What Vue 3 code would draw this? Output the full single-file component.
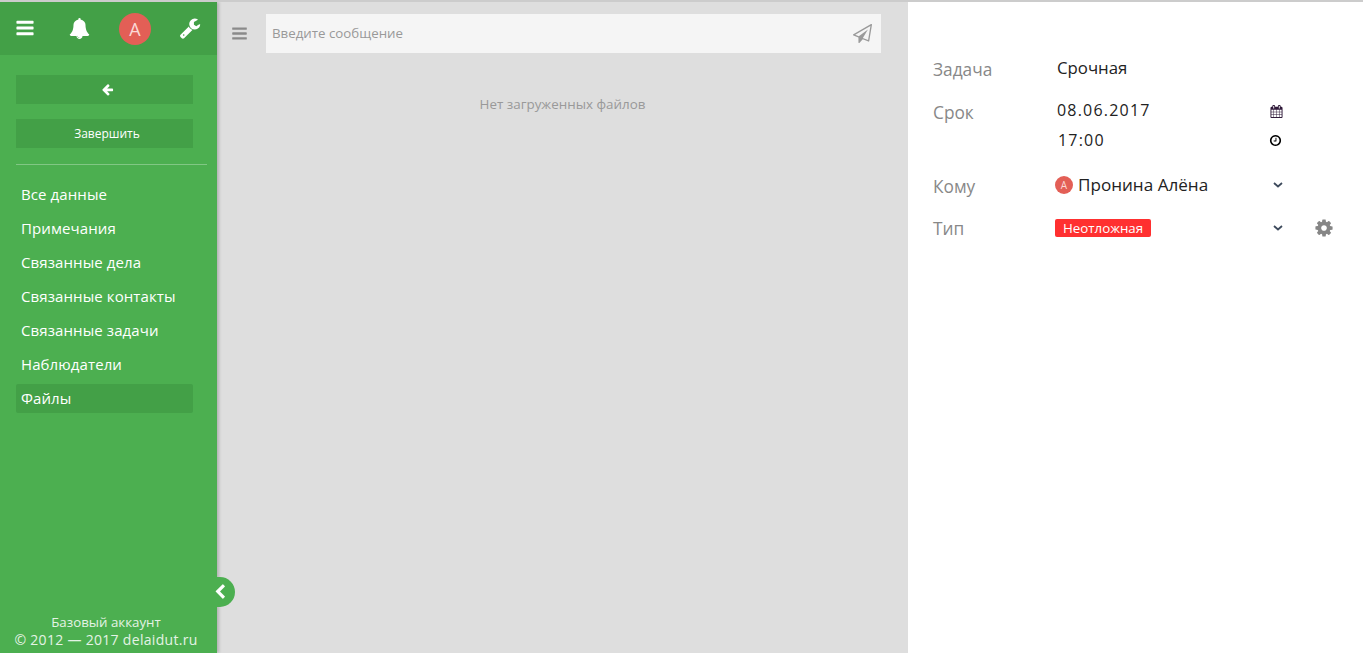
<script setup>
const menu = ['Все данные', 'Примечания', 'Связанные дела', 'Связанные контакты', 'Связанные задачи', 'Наблюдатели', 'Файлы']
const icons = {
  bars: 'M1664 1344v128q0 26-19 45t-45 19h-1408q-26 0-45-19t-19-45v-128q0-26 19-45t45-19h1408q26 0 45 19t19 45zm0-512v128q0 26-19 45t-45 19h-1408q-26 0-45-19t-19-45v-128q0-26 19-45t45-19h1408q26 0 45 19t19 45zm0-512v128q0 26-19 45t-45 19h-1408q-26 0-45-19t-19-45v-128q0-26 19-45t45-19h1408q26 0 45 19t19 45z',
  bell: 'M912 1696q0-16-16-16-59 0-101.500-42.500t-42.500-101.500q0-16-16-16t-16 16q0 73 51.500 124.500t124.500 51.500q16 0 16-16zm816-288q0 52-38 90t-90 38h-448q0 106-75 181t-181 75-181-75-75-181h-448q-52 0-90-38t-38-90q50-42 91-88t85-119.500 74.500-158.500 50-206 19.500-260q0-152 117-282.500t307-158.500q-8-19-8-39 0-40 28-68t68-28 68 28 28 68q0 20-8 39 190 28 307 158.500t117 282.500q0 139 19.500 260t50 206 74.500 158.500 85 119.500 91 88z',
  wrench: 'M448 1472q0-26-19-45t-45-19-45 19-19 45 19 45 45 19 45-19 19-45zm644-420l-682 682q-37 37-90 37-52 0-91-37l-106-108q-38-36-38-90 0-53 38-91l680-680q39 98 114.500 173.500t173.500 114.500zm634-435q0 39-23 106-47 134-164.500 217.500t-258.500 83.500q-185 0-316.500-131.500t-131.500-316.500 131.500-316.500 316.500-131.500q58 0 121.500 16.500t107.500 46.500q16 11 16 28t-16 28l-293 169v224l193 107q5-3 79-48.500t135.500-81 70.500-35.500q15 0 23.500 10t8.500 25z',
  arrow: 'M1664 896v128q0 53-32.500 90.500t-84.500 37.500h-704l293 294q38 36 38 90t-38 90l-75 76q-37 37-90 37-52 0-91-37l-651-652q-37-37-37-90 0-52 37-91l651-650q38-38 91-38 52 0 90 38l75 74q38 38 38 91t-38 91l-293 293h704q52 0 84.500 37.500t32.500 90.500z',
  chevron: 'M1427 301l-531 531 531 531q19 19 19 45t-19 45l-166 166q-19 19-45 19t-45-19l-742-742q-19-19-19-45t19-45l742-742q19-19 45-19t45 19l166 166q19 19 19 45t-19 45z',
  plane: 'M1764 11q33 24 27 64l-256 1536q-5 29-32 45-14 8-31 8-11 0-24-5l-527-215-298 327q-18 21-47 21-14 0-23-4-19-7-30-23.500t-11-36.500v-452l-472-193q-37-14-40-55-3-39 32-59l1664-960q35-21 68 2zm-342 1499l221-1323-1434 827 336 137 863-639-478 797z',
  cog: 'M1152 896q0-106-75-181t-181-75-181 75-75 181 75 181 181 75 181-75 75-181zm512-109v222q0 12-8 23t-20 13l-185 28q-19 54-39 91 35 50 107 138 10 12 10 25t-9 23q-27 37-99 108t-94 71q-12 0-26-9l-138-108q-44 23-91 38-16 136-29 186-7 28-36 28h-222q-14 0-24.500-8.500t-11.500-21.500l-28-184q-49-16-90-37l-141 107q-10 9-25 9-14 0-25-11-126-114-165-168-7-10-7-23 0-12 8-23 15-21 51-66.500t54-70.500q-27-50-41-99l-183-27q-13-2-21-12.500t-8-23.500v-222q0-12 8-23t19-13l186-28q14-46 39-92-40-57-107-138-10-12-10-24 0-10 9-23 26-36 98.500-107.500t94.500-71.500q13 0 26 10l138 107q44-23 91-38 16-136 29-186 7-28 36-28h222q14 0 24.500 8.500t11.500 21.500l28 184q49 16 90 37l142-107q9-9 24-9 13 0 25 10 129 119 165 170 7 8 7 22 0 12-8 23-15 21-51 66.500t-54 70.500q26 50 41 98l183 28q13 2 21 12.500t8 23.500z',
  clock: 'M1024 544v448q0 14-9 23t-23 9h-320q-14 0-23-9t-9-23v-64q0-14 9-23t23-9h224v-352q0-14 9-23t23-9h64q14 0 23 9t9 23zm416 352q0-148-73-273t-198-198-273-73-273 73-198 198-73 273 73 273 198 198 273 73 273-73 198-198 73-273zm224 0q0 209-103 385.500t-279.500 279.500-385.500 103-385.500-103-279.500-279.500-103-385.500 103-385.500 279.500-279.500 385.500-103 385.500 103 279.500 279.500 103 385.500z',
  cal: 'M192 1664h288v-288h-288v288zm352 0h320v-288h-320v288zm-352-352h288v-320h-288v320zm352 0h320v-320h-320v320zm-352-384h288v-288h-288v288zm736 736h320v-288h-320v288zm-384-736h320v-288h-320v288zm768 736h288v-288h-288v288zm-384-352h320v-320h-320v320zm-352-864v-288q0-13-9.500-22.500t-22.500-9.500h-64q-13 0-22.500 9.500t-9.500 22.500v288q0 13 9.500 22.500t22.500 9.500h64q13 0 22.500-9.500t9.500-22.500zm736 864h288v-320h-288v320zm-384-384h320v-288h-320v288zm384 0h288v-288h-288v288zm32-480v-288q0-13-9.500-22.500t-22.500-9.500h-64q-13 0-22.500 9.500t-9.500 22.500v288q0 13 9.500 22.500t22.500 9.500h64q13 0 22.500-9.500t9.500-22.500zm384-64v1280q0 52-38 90t-90 38h-1408q-52 0-90-38t-38-90v-1280q0-52 38-90t90-38h128v-96q0-66 47-113t113-47h64q66 0 113 47t47 113v96h384v-96q0-66 47-113t113-47h64q66 0 113 47t47 113v96h128q52 0 90 38t38 90z'
}
</script>

<template>
  <div class="page">
    <aside class="side">
      <header class="top">
        <svg class="ic bars" viewBox="0 0 1792 1792"><path :d="icons.bars" /></svg>
        <svg class="ic bell" viewBox="0 0 1792 1792"><path :d="icons.bell" /></svg>
        <span class="ava">А</span>
        <svg class="ic wrench" viewBox="0 0 1792 1792"><path :d="icons.wrench" /></svg>
      </header>
      <div class="actions">
        <button class="btn"><svg class="ic back" viewBox="0 0 1792 1792"><path :d="icons.arrow" /></svg></button>
        <button class="btn">Завершить</button>
      </div>
      <hr class="sep" />
      <nav class="menu">
        <a v-for="m in menu" :key="m" class="item" :class="{ on: m === 'Файлы' }">{{ m }}</a>
      </nav>
      <footer class="foot">
        <div>Базовый аккаунт</div>
        <div class="copy">© 2012 — 2017 delaidut.ru</div>
      </footer>
      <span class="handle"><svg class="ic chev" viewBox="0 0 1792 1792"><path :d="icons.chevron" /></svg></span>
    </aside>

    <main class="main">
      <div class="msgbar">
        <svg class="ic mbars" viewBox="0 0 1792 1792"><path :d="icons.bars" /></svg>
        <div class="input">
          <span class="ph">Введите сообщение</span>
          <svg class="ic plane" viewBox="0 0 1792 1792"><path :d="icons.plane" /></svg>
        </div>
      </div>
      <p class="empty">Нет загруженных файлов</p>
    </main>

    <section class="panel">
      <div class="row r1">
        <span class="lab">Задача</span><span class="val">Срочная</span>
      </div>
      <div class="row r2">
        <span class="lab">Срок</span>
        <div class="dates">
          <div class="dline first"><span class="date">08.06.2017</span><svg class="ic cal" viewBox="0 0 1792 1792"><path :d="icons.cal" /></svg></div>
          <div class="dline"><span class="date time">17:00</span><svg class="ic clock" viewBox="0 0 1792 1792"><path :d="icons.clock" /></svg></div>
        </div>
      </div>
      <div class="row r3">
        <span class="lab">Кому</span>
        <div class="sel">
          <span class="mini">А</span><span class="who">Пронина Алёна</span>
          <svg class="dn" viewBox="0 0 10 6"><path d="M1 1l4 3.500L9 1" /></svg>
        </div>
      </div>
      <div class="row r4">
        <span class="lab">Тип</span>
        <div class="sel">
          <span class="tag">Неотложная</span>
          <svg class="dn" viewBox="0 0 10 6"><path d="M1 1l4 3.500L9 1" /></svg>
          <svg class="ic gear" viewBox="0 0 1792 1792"><path :d="icons.cog" /></svg>
        </div>
      </div>
    </section>
  </div>
</template>

<style>
html, body { margin: 0; overflow: hidden; }
</style>

<style scoped>
.page {
  display: flex;
  height: 653px;
  box-sizing: border-box;
  border-top: 2px solid #ccc;
  font-family: "Open Sans", sans-serif;
  background: #fff;
  overflow: hidden;
}
.ic { display: block; fill: currentColor; flex: none; }
.side {
  position: relative;
  z-index: 1;
  width: 217px;
  flex: none;
  display: flex;
  flex-direction: column;
  background: #4caf50;
  color: #fff;
  box-shadow: 2px 0 3px rgba(0, 0, 0, .2);
}
.top {
  height: 53px;
  background: #43a047;
  display: flex;
  align-items: center;
  padding-left: 15px;
  box-sizing: border-box;
}
.bars { width: 20px; height: 20px; margin-top: -2px; }
.bell { width: 21px; height: 21px; margin: -1px 0 0 34px; }
.wrench { width: 22px; height: 22px; margin: -2px 0 0 28px; }
.ava {
  width: 32px; height: 32px; border-radius: 50%;
  background: #e35f56; color: #fbd8d5;
  display: flex; align-items: center; justify-content: center;
  font-size: 18px; margin-left: 29px;
}
.actions {
  padding: 20px 24px 0 16px;
  display: flex; flex-direction: column; gap: 15px;
}
.btn {
  height: 29px; border: 0; padding: 0 0 0 5px;
  background: #43a047; color: #fff;
  font: 12px "Open Sans", sans-serif;
  display: flex; align-items: center; justify-content: center;
}
.back { width: 13px; height: 13px; }
.sep { margin: 16px 10px 0 16px; border: 0; border-top: 1px solid #81c784; }
.menu {
  padding: 15px 24px 0 16px;
  display: flex; flex-direction: column; gap: 5px;
}
.item {
  height: 29px; line-height: 29px; padding-left: 5px;
  font-size: 15px; letter-spacing: .1px; border-radius: 2px;
}
.item.on { background: #43a047; }
.foot {
  margin-top: auto;
  padding-bottom: 5px;
  text-align: center;
  font-size: 13.300px;
  line-height: 17px;
  color: #e4f3e5;
  margin-right: 5px;
  white-space: nowrap;
}
.copy { font-size: 14px; letter-spacing: .3px; }
.handle {
  position: absolute;
  left: 207px; top: 575px;
  width: 28px; height: 30px;
  border-radius: 0 15px 15px 0;
  background: #4caf50;
  display: flex; align-items: center;
  padding-left: 5px; box-sizing: border-box;
}
.chev { width: 16px; height: 16px; }
.main {
  width: 691px; flex: none;
  background: #dedede;
  box-sizing: border-box;
}
.msgbar {
  display: flex; align-items: center;
  padding: 12px 27px 0 14px;
}
.mbars { width: 17px; height: 17px; color: #8a8a8a; margin-right: 18px; }
.input {
  flex: 1; height: 39px;
  background: #f5f5f5; color: #999;
  display: flex; align-items: center; justify-content: space-between;
  padding: 0 9px 0 6px;
  font-size: 13.300px;
}
.ph { margin-top: -2px; }
.plane { width: 19px; height: 19px; color: #9a9a9a; }
.empty {
  margin: 42px 0 0;
  text-align: center;
  color: #999;
  font-size: 13.400px;
  line-height: 18px;
}
.panel {
  flex: 1;
  padding: 55px 0 0 25px;
  color: #222;
}
.row { display: flex; line-height: 22px; }
.lab {
  width: 124px; flex: none;
  font-size: 17.300px; color: #888;
  padding-top: 2px;
}
.val { font-size: 16.800px; }
.r1 { height: 43px; }
.r2 { height: 74px; }
.r3 { height: 42px; }
.dates { width: 226px; }
.dline { display: flex; align-items: center; justify-content: space-between; height: 30px; }
.first { margin-top: -6px; height: 31px; }
.date { font-size: 16px; letter-spacing: 1.200px; }
.time { padding-left: 1px; }
.cal { width: 13px; height: 13px; color: #301a3a; margin: 3px 0 0; }
.clock { width: 13px; height: 13px; color: #000; margin-right: 1px; }
.sel { display: flex; align-items: center; width: 300px; height: 22px; margin-left: -2px; position: relative; }
.r4 .sel { margin-top: 1px; }
.mini {
  width: 18px; height: 18px; border-radius: 50%;
  background: #e35f56; color: #fbd8d5; font-size: 10px;
  display: flex; align-items: center; justify-content: center;
  margin-right: 5px;
}
.who { font-size: 17.100px; color: #222; }
.tag {
  background: #ff3030; color: #fff; border-radius: 2px;
  font-size: 13.300px; line-height: 18px; height: 18px;
  padding: 0 8px;
}
.dn { position: absolute; left: 218px; top: 8px; width: 10px; height: 6px; fill: none; stroke: #3d4a5c; stroke-width: 1.800; }
.gear { position: absolute; left: 259px; top: 1px; width: 20px; height: 20px; color: #868686; }
</style>
